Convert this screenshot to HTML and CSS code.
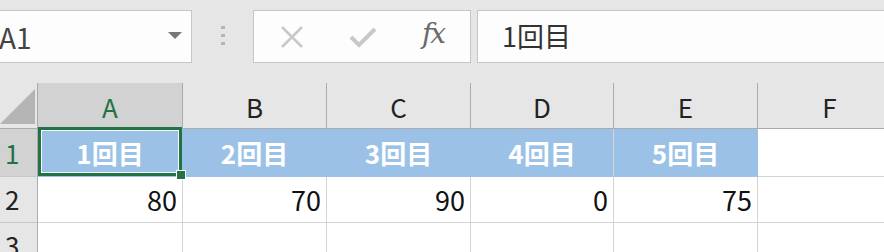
FILE: index.html
```html
<!DOCTYPE html>
<html lang="ja">
<head>
    <meta charset="UTF-8">
    <title>Sheet</title>
    <link rel="stylesheet" href="styles.css">
</head>
<body>
    <div class="toolbar">
        <div class="namebox">
            <span class="ref">A1</span>
            <span class="caret"></span>
        </div>
        <div class="grip"><i></i><i></i><i></i></div>
        <div class="fbuttons">
            <svg class="ico" width="26" height="22" viewBox="0 0 26 22">
                <path d="M3 1 L23 21 M23 1 L3 21" stroke="#c8c8c8" stroke-width="2.6" fill="none"/>
            </svg>
            <svg class="ico" width="28" height="22" viewBox="0 0 28 22">
                <path d="M2 11 L10 19 L26 3" stroke="#c8c8c8" stroke-width="4" fill="none"/>
            </svg>
            <span class="fx">fx</span>
        </div>
        <div class="formula">1回目</div>
    </div>

    <div class="sheet">
        <div class="corner"><span class="tri"></span></div>
        <div class="colhead active">A</div>
        <div class="colhead">B</div>
        <div class="colhead">C</div>
        <div class="colhead">D</div>
        <div class="colhead">E</div>
        <div class="colhead">F</div>

        <div class="rowhead active">1</div>
        <div class="cell title selected">1回目<span class="handle"></span></div>
        <div class="cell title">2回目</div>
        <div class="cell title">3回目</div>
        <div class="cell title">4回目</div>
        <div class="cell title">5回目</div>
        <div class="cell"></div>

        <div class="rowhead">2</div>
        <div class="cell num">80</div>
        <div class="cell num">70</div>
        <div class="cell num">90</div>
        <div class="cell num">0</div>
        <div class="cell num">75</div>
        <div class="cell"></div>

        <div class="rowhead">3</div>
        <div class="cell"></div>
        <div class="cell"></div>
        <div class="cell"></div>
        <div class="cell"></div>
        <div class="cell"></div>
        <div class="cell"></div>
    </div>
</body>
</html>
```

FILE: styles.css
```css
body {
    margin: 0;
    background: #e6e6e6;
    font-family: "Noto Sans CJK JP", "Noto Sans", sans-serif;
    overflow: hidden;
    width: 884px;
    height: 252px;
}

.toolbar {
    height: 83px;
    display: flex;
    align-items: flex-start;
    padding-top: 10px;
    box-sizing: border-box;
}

.namebox {
    width: 192px;
    height: 53px;
    box-sizing: border-box;
    background: #fdfdfd;
    border: 1px solid #c6c6c6;
    border-left: none;
    display: flex;
    align-items: center;
    justify-content: space-between;
    padding-right: 9px;
}

.ref {
    font-size: 28px;
    color: #444;
    margin-left: -1px;
}

.caret {
    width: 0;
    height: 0;
    border-left: 7px solid transparent;
    border-right: 7px solid transparent;
    border-top: 7px solid #777;
    margin-top: -3px;
}

.grip {
    width: 61px;
    display: flex;
    flex-direction: column;
    align-items: center;
    gap: 5px;
    padding-top: 16px;
}

.grip i {
    width: 4px;
    height: 3px;
    background: #b4b4b4;
}

.fbuttons {
    width: 218px;
    height: 53px;
    box-sizing: border-box;
    background: #fdfdfd;
    border: 1px solid #c6c6c6;
    display: flex;
    align-items: center;
    padding-left: 25px;
}

.fbuttons .ico:first-child {
    margin-right: 44px;
}

.fx {
    font-family: "DejaVu Serif", "Liberation Serif", serif;
    font-style: italic;
    font-size: 28px;
    color: #6a6a6a;
    margin-left: 45px;
    margin-top: -6px;
    letter-spacing: -2px;
}

.formula {
    margin-left: 6px;
    flex: 1;
    height: 53px;
    box-sizing: border-box;
    background: #fdfdfd;
    border: 1px solid #c6c6c6;
    border-right: none;
    font-size: 27px;
    color: #333;
    padding-left: 24px;
    line-height: 50px;
}

.sheet {
    display: grid;
    grid-template-columns: 38px 145px 144px 144px 143px 144px 144px;
    grid-template-rows: 46px 48px 46px 40px;
    background: #fff;
}

.corner {
    background: #e6e6e6;
    border-right: 1px solid #ababab;
    border-bottom: 1px solid #ababab;
    position: relative;
}

.tri {
    position: absolute;
    left: 0;
    bottom: 4px;
    width: 0;
    height: 0;
    border-left: 35px solid transparent;
    border-bottom: 35px solid #b4b4b4;
}

.colhead {
    background: #e6e6e6;
    border-right: 1px solid #ababab;
    border-bottom: 1px solid #ababab;
    font-size: 26px;
    color: #222;
    text-align: center;
    line-height: 48px;
}

.colhead.active {
    background: #d2d2d2;
    color: #217346;
}

.rowhead {
    background: #e6e6e6;
    border-right: 1px solid #ababab;
    border-bottom: 1px solid #c8c8c8;
    font-size: 26px;
    color: #222;
    padding-left: 5px;
    line-height: 44px;
}

.rowhead.active {
    background: #d2d2d2;
    color: #217346;
    line-height: 48px;
}

.cell {
    border-right: 1px solid #d4d4d4;
    border-bottom: 1px solid #d4d4d4;
    position: relative;
}

.title {
    background: #9bc2e6;
    border-color: #9bc2e6;
    color: #fff;
    font-weight: bold;
    font-size: 26px;
    text-align: center;
    line-height: 48px;
}

.title:nth-child(12) {
    border-right-color: #d4d4d4;
}

.num {
    text-align: right;
    font-size: 27px;
    color: #111;
    padding-right: 5px;
    line-height: 46px;
}

.selected {
    box-shadow: inset 0 0 0 3px #217346, inset 0 0 0 4px #fff;
    margin: -2px 0 0 0;
    line-height: 52px;
}

.handle {
    position: absolute;
    right: -4px;
    bottom: -4px;
    width: 8px;
    height: 8px;
    background: #217346;
    border: 1px solid #fff;
    z-index: 2;
}
```
